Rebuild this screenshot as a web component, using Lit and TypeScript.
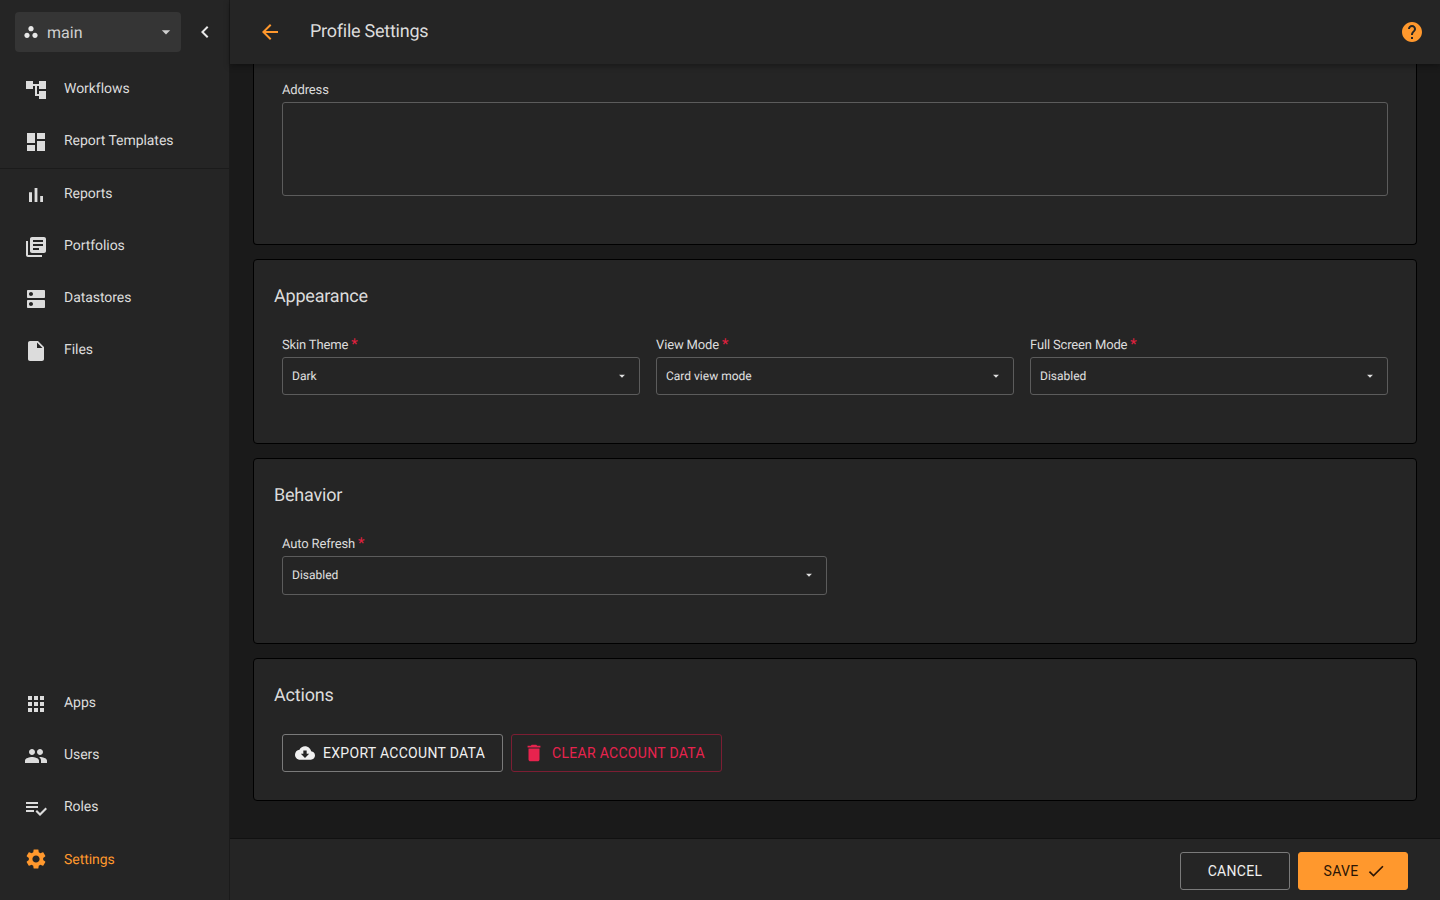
import { html, css, LitElement } from 'lit';
import { customElement } from 'lit/decorators.js';

const icons: Record<string, string> = {
	workspace: 'M6 13c-2.2 0-4 1.8-4 4s1.8 4 4 4 4-1.8 4-4-1.8-4-4-4zm6-10C9.8 3 8 4.8 8 7s1.8 4 4 4 4-1.8 4-4-1.8-4-4-4zm6 10c-2.2 0-4 1.8-4 4s1.8 4 4 4 4-1.8 4-4-1.8-4-4-4z',
	drop: 'M7 10l5 5 5-5z',
	chevron: 'M15.41 7.41L14 6l-6 6 6 6 1.41-1.41L10.83 12z',
	tree: 'M22 11V3h-7v3H9V3H2v8h7V8h2v10h4v3h7v-8h-7v3h-2V8h2v3z',
	dashboard: 'M3 13h8V3H3v10zm0 8h8v-6H3v6zm10 0h8V11h-8v10zm0-18v6h8V3h-8z',
	bars: 'M5 9.2h3V19H5zM10.6 5h2.8v14h-2.8zm5.6 8H19v6h-2.8z',
	library: 'M4 6H2v14c0 1.1.9 2 2 2h14v-2H4V6zm16-4H8c-1.1 0-2 .9-2 2v12c0 1.1.9 2 2 2h12c1.1 0 2-.9 2-2V4c0-1.1-.9-2-2-2zm-1 9H9V9h10v2zm-4 4H9v-2h6v2zm4-8H9V5h10v2z',
	dns: 'M20 13H4c-.55 0-1 .45-1 1v6c0 .55.45 1 1 1h16c.55 0 1-.45 1-1v-6c0-.55-.45-1-1-1zM7 19c-1.1 0-2-.9-2-2s.9-2 2-2 2 .9 2 2-.9 2-2 2zM20 3H4c-.55 0-1 .45-1 1v6c0 .55.45 1 1 1h16c.55 0 1-.45 1-1V4c0-.55-.45-1-1-1zM7 9c-1.1 0-2-.9-2-2s.9-2 2-2 2 .9 2 2-.9 2-2 2z',
	file: 'M6 2c-1.1 0-1.99.9-1.99 2L4 20c0 1.1.89 2 1.99 2H18c1.1 0 2-.9 2-2V8l-6-6H6zm7 7V3.5L18.5 9H13z',
	apps: 'M4 8h4V4H4v4zm6 12h4v-4h-4v4zm-6 0h4v-4H4v4zm0-6h4v-4H4v4zm6 0h4v-4h-4v4zm6-10v4h4V4h-4zm-6 4h4V4h-4v4zm6 6h4v-4h-4v4zm0 6h4v-4h-4v4z',
	people: 'M16 11c1.66 0 2.99-1.34 2.99-3S17.66 5 16 5c-1.66 0-3 1.34-3 3s1.34 3 3 3zm-8 0c1.66 0 2.99-1.34 2.99-3S9.66 5 8 5C6.34 5 5 6.34 5 8s1.34 3 3 3zm0 2c-2.33 0-7 1.17-7 3.5V19h14v-2.5c0-2.33-4.67-3.5-7-3.5zm8 0c-.29 0-.62.02-.97.05 1.16.84 1.97 1.97 1.97 3.45V19h6v-2.5c0-2.33-4.67-3.5-7-3.5z',
	roles: 'M14 10H2v2h12v-2zm0-4H2v2h12V6zM2 16h8v-2H2v2zm19.5-4.5L23 13l-6.99 7-4.51-4.5L13 14l3.01 3 5.49-5.5z',
	gear: 'M19.14 12.94c.04-.3.06-.61.06-.94 0-.32-.02-.64-.07-.94l2.03-1.58c.18-.14.23-.41.12-.61l-1.92-3.32c-.12-.22-.37-.29-.59-.22l-2.39.96c-.5-.38-1.03-.7-1.62-.94l-.36-2.54c-.04-.24-.24-.41-.48-.41h-3.84c-.24 0-.43.17-.47.41l-.36 2.54c-.59.24-1.13.57-1.62.94l-2.39-.96c-.22-.08-.47 0-.59.22L2.74 8.87c-.12.21-.08.47.12.61l2.03 1.58c-.05.3-.09.63-.09.94s.02.64.07.94l-2.03 1.58c-.18.14-.23.41-.12.61l1.92 3.32c.12.22.37.29.59.22l2.39-.96c.5.38 1.03.7 1.62.94l.36 2.54c.05.24.24.41.48.41h3.84c.24 0 .44-.17.47-.41l.36-2.54c.59-.24 1.13-.56 1.62-.94l2.39.96c.22.08.47 0 .59-.22l1.92-3.32c.12-.22.07-.47-.12-.61l-2.01-1.58zM12 15.6c-1.98 0-3.6-1.62-3.6-3.6s1.62-3.6 3.6-3.6 3.6 1.62 3.6 3.6-1.62 3.6-3.6 3.6z',
	back: 'M20 11H7.83l5.59-5.59L12 4l-8 8 8 8 1.41-1.41L7.83 13H20v-2z',
	help: 'M12 2C6.48 2 2 6.48 2 12s4.48 10 10 10 10-4.48 10-10S17.52 2 12 2zm1 17h-2v-2h2v2zm2.07-7.75l-.9.92C13.45 12.9 13 13.5 13 15h-2v-.5c0-1.1.45-2.1 1.17-2.83l1.24-1.26c.37-.36.59-.86.59-1.41 0-1.1-.9-2-2-2s-2 .9-2 2H8c0-2.21 1.79-4 4-4s4 1.79 4 4c0 .88-.36 1.68-.93 2.25z',
	cloud: 'M19.35 10.04C18.67 6.59 15.64 4 12 4 9.11 4 6.6 5.64 5.35 8.04 2.34 8.36 0 10.91 0 14c0 3.31 2.69 6 6 6h13c2.76 0 5-2.24 5-5 0-2.64-2.05-4.78-4.65-4.96zM17 13l-5 5-5-5h3V9h4v4h3z',
	trash: 'M6 19c0 1.1.9 2 2 2h8c1.1 0 2-.9 2-2V7H6v12zM19 4h-3.5l-1-1h-5l-1 1H5v2h14V4z',
	check: 'M9 16.17L4.83 12l-1.42 1.41L9 19 21 7l-1.41-1.41z',
};

const icon = (name: string, size = 24) => html`
	<svg class="icon" width=${size} height=${size} viewBox="0 0 24 24" fill="currentColor"><path d=${icons[name]}></path></svg>
`;

const topNav = [
	{ label: 'Workflows', icon: 'tree' },
	{ label: 'Report Templates', icon: 'dashboard' },
];
const midNav = [
	{ label: 'Reports', icon: 'bars' },
	{ label: 'Portfolios', icon: 'library' },
	{ label: 'Datastores', icon: 'dns' },
	{ label: 'Files', icon: 'file' },
];
const bottomNav = [
	{ label: 'Apps', icon: 'apps' },
	{ label: 'Users', icon: 'people' },
	{ label: 'Roles', icon: 'roles' },
];

@customElement('app-root')
export class AppRoot extends LitElement {
	static styles = css`
		:host {
			display: flex;
			height: 100vh;
			overflow: hidden;
			background: #1a1a1a;
			color: #e0e0e0;
			font-family: Roboto, "Liberation Sans", sans-serif;
			font-size: 14px;
			text-rendering: geometricPrecision;
		}
		.icon {
			display: block;
			flex: none;
		}
		.sidebar {
			width: 230px;
			flex: none;
			box-sizing: border-box;
			display: flex;
			flex-direction: column;
			background: #252525;
			border-right: 1px solid #1b1b1b;
		}
		.brand {
			height: 64px;
			flex: none;
			box-sizing: border-box;
			padding: 12px 0 12px 15px;
			display: flex;
			align-items: center;
		}
		.workspace {
			width: 166px;
			height: 40px;
			box-sizing: border-box;
			padding: 0 5px 0 8px;
			display: flex;
			align-items: center;
			background: #353535;
			border-radius: 4px;
			color: #cfcfcf;
			font-size: 16px;
		}
		.workspace .icon:first-child {
			color: #e8e8e8;
		}
		.workspace .name {
			flex: 1;
			margin-left: 8px;
		}
		.collapse {
			margin-left: 12px;
			color: #e8e8e8;
		}
		.group {
			display: flex;
			flex-direction: column;
			gap: 4px;
		}
		.group.first {
			padding-bottom: 4px;
			border-bottom: 1px solid #1b1b1b;
		}
		.spacer {
			flex: 1;
		}
		.group.last {
			padding-bottom: 17px;
		}
		.item {
			height: 48px;
			padding-left: 24px;
			display: flex;
			align-items: center;
			gap: 16px;
			letter-spacing: -0.05px;
			color: #dcdcdc;
		}
		.item .icon {
			margin-top: 4px;
		}
		.item span {
			margin-top: 2px;
		}
		.item.active {
			margin-top: 1px;
			color: #ff982d;
		}
		.item.active .icon {
			margin-top: 0;
		}
		.main {
			flex: 1;
			min-width: 0;
			display: flex;
			flex-direction: column;
		}
		.topbar {
			height: 64px;
			flex: none;
			box-sizing: border-box;
			padding: 0 16px 0 28px;
			display: flex;
			align-items: center;
			background: #252525;
			box-shadow: 0 2px 6px rgba(0, 0, 0, 0.35);
			position: relative;
		}
		.topbar .back {
			color: #ff982d;
		}
		.topbar h1 {
			flex: 1;
			margin: 0 0 2px 28px;
			font-size: 18px;
			font-weight: 400;
			letter-spacing: -0.25px;
			color: #dcdcdc;
		}
		.topbar .help {
			color: #ff982d;
		}
		.content {
			flex: 1;
			min-height: 0;
			padding: 0 23px;
			display: flex;
			flex-direction: column;
			gap: 14px;
		}
		.card {
			box-sizing: border-box;
			padding: 20px;
			background: #252525;
			border: 1px solid #000;
			border-radius: 4px;
		}
		.card.cut {
			height: 181px;
			padding-top: 17px;
			border-top: 0;
			border-radius: 0 0 4px 4px;
		}
		.card.behavior {
			height: 186px;
		}
		.card h2 {
			margin: 0;
			height: 32px;
			font-size: 18px;
			line-height: 34px;
			font-weight: 400;
			letter-spacing: -0.2px;
			color: #dcdcdc;
		}
		.fields {
			display: grid;
			gap: 16px;
			padding: 24px 8px 28px;
		}
		.fields.three {
			grid-template-columns: repeat(3, 1fr);
		}
		.fields.two {
			grid-template-columns: repeat(2, 1fr);
		}
		.cut .fields {
			grid-template-columns: 1fr;
			padding-top: 0;
		}
		label {
			display: block;
			height: 18px;
			margin-bottom: 3px;
			font-size: 13px;
			line-height: 20px;
			letter-spacing: -0.15px;
			color: #dcdcdc;
		}
		label .req {
			margin-left: 3px;
			font-size: 15px;
			line-height: 0;
			color: #e0213f;
		}
		.select {
			height: 38px;
			box-sizing: border-box;
			padding: 0 10px 0 9px;
			display: flex;
			align-items: center;
			justify-content: space-between;
			border: 1px solid #5c5c5c;
			border-radius: 3px;
			font-size: 12px;
			color: #e0e0e0;
		}
		.behavior .select {
			height: 39px;
			padding-bottom: 1px;
		}
		.textarea {
			height: 94px;
			box-sizing: border-box;
			border: 1px solid #5c5c5c;
			border-radius: 3px;
		}
		.actions {
			display: flex;
			gap: 8px;
			padding: 23px 8px 8px;
		}
		.btn {
			height: 38px;
			box-sizing: border-box;
			padding: 0;
			display: flex;
			align-items: center;
			justify-content: center;
			background: transparent;
			border: 1px solid #7a7a7a;
			border-radius: 3px;
			font: inherit;
			letter-spacing: 0.3px;
			text-transform: uppercase;
			color: #f0f0f0;
		}
		.btn.export {
			width: 221px;
			justify-content: flex-start;
			padding-left: 12px;
			gap: 8px;
		}
		.btn.clear {
			width: 211px;
			justify-content: flex-start;
			padding-left: 11px;
			gap: 7px;
			border-color: #7c1e33;
			color: #e8234e;
		}
		.footer {
			height: 62px;
			flex: none;
			box-sizing: border-box;
			padding: 3px 32px 0 0;
			display: flex;
			align-items: center;
			justify-content: flex-end;
			gap: 8px;
			background: #252525;
			border-top: 1px solid #111;
		}
		.btn.cancel,
		.btn.save {
			width: 110px;
		}
		.btn.save {
			padding-left: 4px;
			gap: 8px;
			background: #ff982d;
			border-color: #ff982d;
			color: #2a1505;
		}
	`;

	private renderNav(items: { label: string; icon: string }[]) {
		return items.map(
			(item) => html`<div class="item">${icon(item.icon)}<span>${item.label}</span></div>`
		);
	}

	private renderSelect(label: string, value: string) {
		return html`
			<div class="field">
				<label>${label}<span class="req">*</span></label>
				<div class="select"><span>${value}</span>${icon('drop', 14)}</div>
			</div>
		`;
	}

	render() {
		return html`
			<nav class="sidebar">
				<div class="brand">
					<div class="workspace">
						${icon('workspace', 16)}
						<span class="name">main</span>
						${icon('drop', 20)}
					</div>
					<div class="collapse">${icon('chevron', 24)}</div>
				</div>
				<div class="group first">${this.renderNav(topNav)}</div>
				<div class="group">${this.renderNav(midNav)}</div>
				<div class="spacer"></div>
				<div class="group last">
					${this.renderNav(bottomNav)}
					<div class="item active">${icon('gear')}<span>Settings</span></div>
				</div>
			</nav>
			<div class="main">
				<header class="topbar">
					<div class="back">${icon('back')}</div>
					<h1>Profile Settings</h1>
					<div class="help">${icon('help')}</div>
				</header>
				<div class="content">
					<section class="card cut">
						<div class="fields">
							<div class="field">
								<label>Address</label>
								<div class="textarea"></div>
							</div>
						</div>
					</section>
					<section class="card">
						<h2>Appearance</h2>
						<div class="fields three">
							${this.renderSelect('Skin Theme', 'Dark')}
							${this.renderSelect('View Mode', 'Card view mode')}
							${this.renderSelect('Full Screen Mode', 'Disabled')}
						</div>
					</section>
					<section class="card behavior">
						<h2>Behavior</h2>
						<div class="fields two">
							${this.renderSelect('Auto Refresh', 'Disabled')}
						</div>
					</section>
					<section class="card">
						<h2>Actions</h2>
						<div class="actions">
							<button class="btn export">${icon('cloud', 20)}<span>Export account data</span></button>
							<button class="btn clear">${icon('trash', 22)}<span>Clear account data</span></button>
						</div>
					</section>
				</div>
				<footer class="footer">
					<button class="btn cancel">Cancel</button>
					<button class="btn save"><span>Save</span>${icon('check', 20)}</button>
				</footer>
			</div>
		`;
	}
}
